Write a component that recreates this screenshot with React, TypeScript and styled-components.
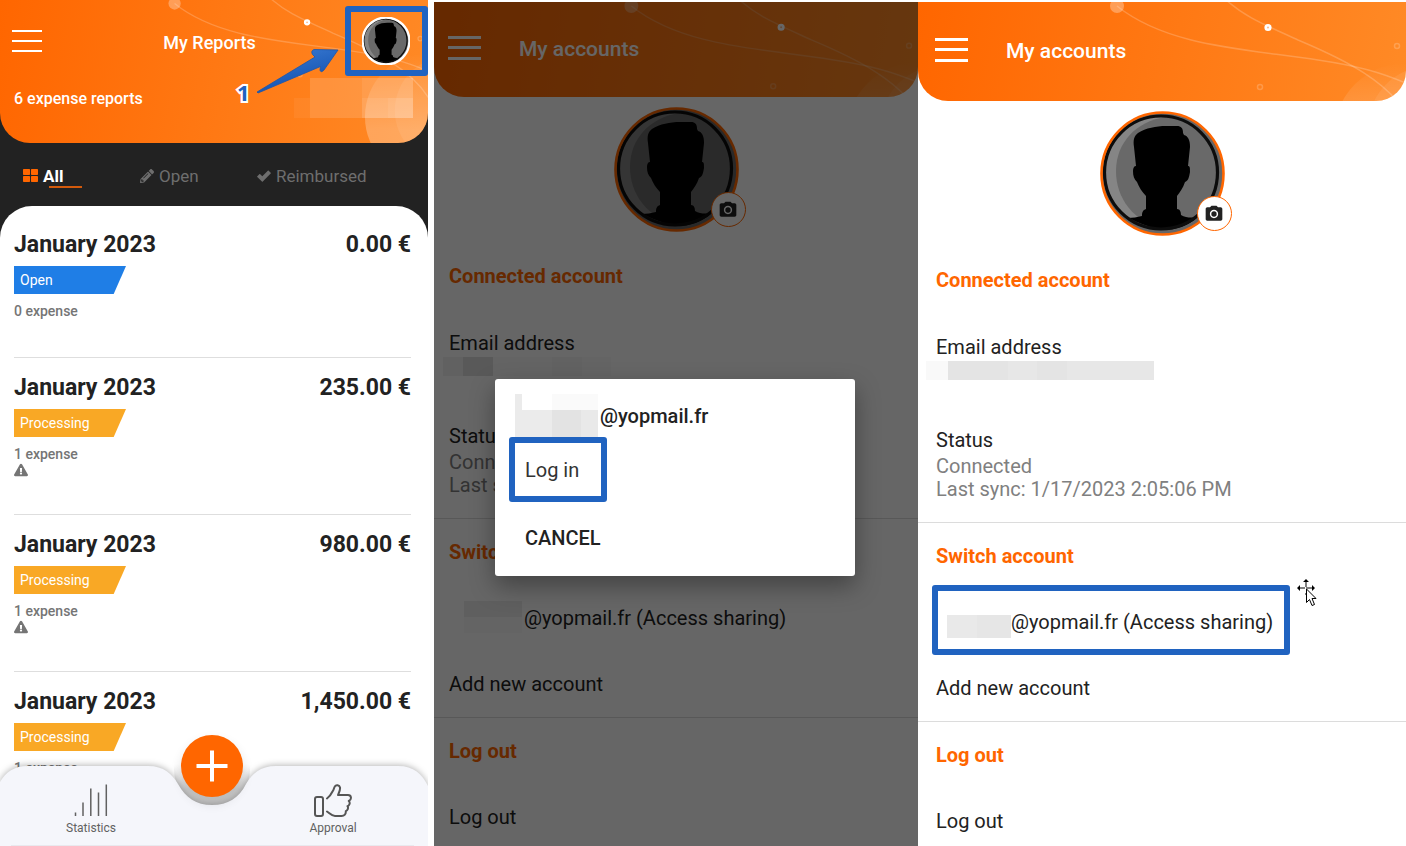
import React from "react";
import styled, { createGlobalStyle, css } from "styled-components";
import { FaPencilAlt, FaThLarge, FaExclamationTriangle } from "react-icons/fa";
import { MdCameraAlt } from "react-icons/md";

const ORANGE = "#ff6600";
const BLUE = "#2063c0";

const GlobalStyle = createGlobalStyle`
  * { box-sizing: border-box; }
  body { margin: 0; background: #fff; font-family: Roboto, "Liberation Sans", sans-serif; color: #222; }
  button { font: inherit; color: inherit; background: none; border: 0; padding: 0; margin: 0; text-align: left; cursor: pointer; }
  h1, h2, h3, p, ul, dl, dd { margin: 0; padding: 0; font: inherit; list-style: none; }
  svg { display: block; }
`;

const Board = styled.div`
  display: grid;
  grid-template-columns: 434fr 484fr 488fr;
  height: 100vh;
`;

/* ---------- shared header ---------- */

const HeaderBar = styled.header`
  position: relative;
  background: linear-gradient(100deg, ${ORANGE} 0%, #ff8a26 100%);
  border-radius: 0 0 30px 30px;
  color: #fff;
  overflow: hidden;
`;

const HeaderArt = styled.svg`
  position: absolute;
  inset: 0;
  width: 100%;
  height: 100%;
`;

function Constellation({ id }: { id: string }) {
  return (
    <HeaderArt viewBox="0 0 488 163" preserveAspectRatio="xMinYMin slice" aria-hidden="true">
      <defs>
        <linearGradient id={id} x1="0" y1="0" x2="0" y2="1">
          <stop offset="0" stopColor="#fff" stopOpacity="0" />
          <stop offset="0.6" stopColor="#fff" stopOpacity="0.26" />
        </linearGradient>
      </defs>
      <circle cx="488" cy="133" r="72" fill={`url(#${id})`} />
      <circle cx="512" cy="126" r="62" fill="#fff" fillOpacity="0.07" />
      <circle cx="199" cy="4" r="7" fill="#fff" fillOpacity="0.3" />
      <g fill="none" stroke="#fff" strokeOpacity="0.2" strokeWidth="1.5">
        <path d="M199 4C250 45 330 47 400 58C440 64 462 70 490 82" />
        <path d="M306 -4C325 14 345 22 380 38C430 59 470 80 490 114" />
        <circle cx="342" cy="85" r="2.5" />
        <circle cx="479" cy="44" r="2.5" />
      </g>
      <circle cx="350" cy="25.500" r="2.300" fill="#ffb98a" stroke="#fff" strokeWidth="2.6" />
    </HeaderArt>
  );
}

const Burger = styled.button<{ $size: number }>`
  position: relative;
  display: flex;
  flex-direction: column;
  justify-content: space-between;
  width: ${(p) => p.$size}px;
  height: ${(p) => (p.$size > 30 ? 24 : 22)}px;
  flex: none;
`;

const BurgerLine = styled.span<{ $thick: boolean }>`
  height: ${(p) => (p.$thick ? 3 : 2)}px;
  background: currentColor;
`;

function MenuButton({ size }: { size: number }) {
  const thick = size > 30;
  return (
    <Burger $size={size} aria-label="Menu">
      <BurgerLine $thick={thick} />
      <BurgerLine $thick={thick} />
      <BurgerLine $thick={thick} />
    </Burger>
  );
}

/* ---------- avatar drawing ---------- */

const AvatarSvg = styled.svg<{ $size: number }>`
  width: ${(p) => p.$size}px;
  height: ${(p) => p.$size}px;
`;

function AvatarArt({ size, ring }: { size: number; ring: string }) {
  return (
    <AvatarSvg $size={size} viewBox="0 0 125 125" role="img" aria-label="Profile picture">
      <circle cx="62.5" cy="62.5" r="61" fill="#666" />
      <circle cx="61.5" cy="61.5" r="56.500" fill="#858585" />
      <path d="M66 6C36 10 16 32 16 60C16 88 34 110 62 118A56.100 56.100 0 0 0 66 6Z" fill="#696969" />
      <path
        d="M66 15H77C81 15 83 17 83 22L84 24C88 25 90 29 90 36L88 55C90 55 90 57 90 61C89 67 88 70 85 71C83 77 80 81 77 85V98C80 98 81 101 81 104C86 107 92 107 98 106C88 115 76 119 62 119C48 119 36 114 27 107C33 107 37 106 42 105C42 101 43 99 46 98V85C42 81 39 76 37 71C34 68 33 65 33 60C33 57 34 55 36 55L34 36C33 29 34 25 38 22C46 17 56 15 66 15Z"
        fill="#000"
      />
      <path d="M29 107C38 112 47 115 57 118C45 118 36 114 29 107Z" fill="#555" />
      <circle cx="61" cy="61.500" r="56.500" fill="none" stroke="#0c0c0c" strokeWidth="3.2" />
      <circle cx="62.5" cy="62.5" r="61" fill="none" stroke={ring} strokeWidth={size > 60 ? 2.6 : 6} />
    </AvatarSvg>
  );
}

/* ---------- reports screen ---------- */

const ReportsScreen = styled.section`
  position: relative;
  display: flex;
  flex-direction: column;
  margin-right: 6px;
  overflow: hidden;
  background: #222;
`;

const ReportsHeader = styled(HeaderBar)`
  flex: none;
  height: 143px;
`;

const ReportsTop = styled.div`
  position: relative;
  display: flex;
  align-items: center;
  justify-content: space-between;
  height: 82px;
  padding: 5px 0 5px 12px;
`;

const ReportsTitle = styled.h1`
  font-size: 18px;
  line-height: 24px;
  font-weight: 500;
  padding: 3px 0 0 32px;
`;

const ProfileButton = styled.button`
  display: flex;
  align-items: center;
  justify-content: center;
  width: 83px;
  height: 70px;
  border: 6px solid ${BLUE};
  border-radius: 3px;
`;

const ReportsSummary = styled.div`
  position: relative;
  display: flex;
  align-items: center;
  justify-content: space-between;
  padding: 0 15px 0 14px;
  height: 32px;
  font-size: 16px;
  font-weight: 500;
`;

const AmountMask = styled.div`
  display: grid;
  grid-template-columns: 16px 52px 26px 25px;
  grid-template-rows: 20px 20px;
`;

const MaskCell = styled.span<{ $alpha: number }>`
  background: rgba(255, 255, 255, ${(p) => p.$alpha});
`;

const Callout = styled.div`
  position: absolute;
  top: 44px;
  left: 237px;
  display: flex;
  align-items: flex-end;
  gap: 6px;
`;

const CalloutNumber = styled.span`
  font: 700 22px/24px "Open Sans", sans-serif;
  color: ${BLUE};
  -webkit-text-stroke: 4px #fff;
  paint-order: stroke fill;
  margin-bottom: -8px;
`;

const Tabs = styled.nav`
  flex: none;
  display: flex;
  height: 63px;
  padding-left: 23px;
`;

const Tab = styled.button<{ $active?: boolean; $width?: number }>`
  display: flex;
  align-items: center;
  gap: 5px;
  width: ${(p) => p.$width}px;
  font-size: 17px;
  line-height: 24px;
  color: #6e6e6e;
  position: relative;
  padding-top: 2px;
  ${(p) =>
    p.$active &&
    css`
      color: #fff;
      font-weight: 700;
      svg { color: ${ORANGE}; }
      &::after {
        content: "";
        position: absolute;
        left: 26px;
        top: 43px;
        width: 33px;
        height: 2px;
        background: #d35a0c;
      }
    `}
`;

const Sheet = styled.ul`
  flex: 1;
  min-height: 0;
  overflow: hidden;
  padding: 9px 17px 0 14px;
  background: #fff;
  border-radius: 32px 32px 0 0;
`;

const Report = styled.li`
  padding: 16px 0 37px;
  border-bottom: 1px solid #dedede;
`;

const ReportHead = styled.div`
  display: flex;
  justify-content: space-between;
  font-size: 23px;
  line-height: 28px;
  font-weight: 700;
`;

const StatusTag = styled.div<{ $color: string }>`
  width: 112px;
  height: 28px;
  margin: 7px 0 8px;
  padding-left: 6px;
  font-size: 14px;
  line-height: 29px;
  color: #fff;
  background: ${(p) => p.$color};
  clip-path: polygon(0 0, 100% 0, 89% 100%, 0 100%);
`;

const ExpenseCount = styled.p`
  font-size: 14px;
  line-height: 18px;
  font-weight: 500;
  color: #757575;
  & + svg { color: #757575; }
`;

const BottomNav = styled.nav`
  position: absolute;
  left: 0;
  right: 0;
  bottom: 0;
  height: 80px;
  display: flex;
  justify-content: space-between;
  padding: 18px 34px 0 30px;
`;

const NavShape = styled.svg`
  position: absolute;
  inset: 0;
  width: 100%;
  height: 100%;
  overflow: visible;
  filter: drop-shadow(0 -1px 3px rgba(0, 0, 0, 0.28));
`;

const NavItem = styled.button`
  position: relative;
  width: 122px;
  display: flex;
  flex-direction: column;
  align-items: center;
  gap: 3px;
  font-size: 12px;
  line-height: 16px;
  color: #616161;
`;

const AddButton = styled.button`
  position: absolute;
  left: calc(50% - 33px);
  top: -31px;
  width: 62px;
  height: 62px;
  border-radius: 50%;
  background: ${ORANGE};
  display: flex;
  align-items: center;
  justify-content: center;
  box-shadow: 0 6px 12px rgba(0, 0, 0, 0.12);
`;

const TroughShade = styled.svg`
  position: absolute;
  left: calc(50% - 42px);
  top: -20px;
  width: 80px;
  height: 62px;
`;

type ReportData = { amount: string; status: "Open" | "Processing"; expenses: string };

const reports: ReportData[] = [
  { amount: "0.00 €", status: "Open", expenses: "0 expense" },
  { amount: "235.00 €", status: "Processing", expenses: "1 expense" },
  { amount: "980.00 €", status: "Processing", expenses: "1 expense" },
  { amount: "1,450.00 €", status: "Processing", expenses: "1 expense" },
];

function Reports() {
  return (
    <ReportsScreen>
      <ReportsHeader>
        <Constellation id="glow-reports" />
        <ReportsTop>
          <MenuButton size={30} />
          <ReportsTitle>My Reports</ReportsTitle>
          <ProfileButton aria-label="My accounts">
            <AvatarArt size={48} ring="#fff" />
          </ProfileButton>
        </ReportsTop>
        <ReportsSummary>
          <p>6 expense reports</p>
          <AmountMask>
            <MaskCell $alpha={0} />
            <MaskCell $alpha={0.14} />
            <MaskCell $alpha={0.2} />
            <MaskCell $alpha={0.2} />
            <MaskCell $alpha={0.05} />
            <MaskCell $alpha={0.14} />
            <MaskCell $alpha={0.26} />
            <MaskCell $alpha={0.3} />
          </AmountMask>
        </ReportsSummary>
      </ReportsHeader>

      <Tabs>
        <Tab $active $width={117}>
          <FaThLarge size={15} />
          All
        </Tab>
        <Tab $width={117}>
          <FaPencilAlt size={14} />
          Open
        </Tab>
        <Tab $width={114}>
          <svg width="14" height="14" viewBox="0 0 14 14" fill="currentColor" aria-hidden="true">
            <path d="M0.300 7.200L2.300 5.200C2.600 4.900 2.900 4.900 3.200 5.200L5.300 7.300L10.800 1.700C11.100 1.400 11.400 1.400 11.700 1.700L13.700 3.700C14 4 14 4.300 13.700 4.600L5.800 12.400C5.500 12.700 5.200 12.700 4.900 12.400L0.300 8C0 7.700 0 7.500 0.300 7.200Z" />
          </svg>
          Reimbursed
        </Tab>
      </Tabs>

      <Sheet>
        {reports.map((r) => (
          <Report key={r.amount}>
            <ReportHead>
              <h2>January 2023</h2>
              <p>{r.amount}</p>
            </ReportHead>
            <StatusTag $color={r.status === "Open" ? "#1f7ee6" : "#f9a825"}>{r.status}</StatusTag>
            <ExpenseCount>{r.expenses}</ExpenseCount>
            {r.status === "Processing" && <FaExclamationTriangle size={14} />}
          </Report>
        ))}
      </Sheet>

      <BottomNav>
        <TroughShade viewBox="0 0 80 62" aria-hidden="true">
          <defs>
            <linearGradient id="trough" x1="0" y1="0" x2="0" y2="1">
              <stop offset="0.42" stopColor="#d2d2d2" stopOpacity="0" />
              <stop offset="0.75" stopColor="#d2d2d2" />
            </linearGradient>
          </defs>
          <ellipse cx="40" cy="24" rx="38" ry="38" fill="url(#trough)" />
        </TroughShade>
        <NavShape viewBox="0 0 428 80" preserveAspectRatio="none" aria-hidden="true">
          <path
            d="M0 16C6 6 14 0 28 0H148C164 0 172 8 178 18C186 32 196 39 212 39C228 39 239 32 246 18C252 8 260 0 276 0H398C414 0 422 8 428 20V80H0Z"
            fill="#f5f6fb"
          />
          <path d="M11 79.500H414" stroke="#e9e9ee" />
        </NavShape>
        <NavItem>
          <svg width="34" height="33" viewBox="0 0 34 33" fill="none" stroke="#616161" strokeWidth="1.5" aria-hidden="true">
            <path d="M1.500 28.500V32M9 18.500V32M16.800 4.500V32M24.500 8.500V32M32.300 0.500V32" />
          </svg>
          Statistics
        </NavItem>
        <NavItem>
          <svg width="38" height="33" viewBox="0 0 38 33" fill="none" stroke="#555" strokeWidth="2" strokeLinecap="round" strokeLinejoin="round" aria-hidden="true">
            <rect x="1" y="13" width="8" height="19" rx="2" />
            <path d="M13 14.500C16 12.500 17 10.500 18.500 7.500C20 6 19.800 4 20.800 2.500C22 0.500 25.500 1 26 3.500C26.500 6 25 8.500 24 11H34C37.500 11 38 15.500 34.800 17C36.500 18.500 35.500 21.500 33.500 22.200C34.800 24 33.500 26.500 31.800 27.200C32 30 30.500 32 27.500 32H21C17.500 32 16 29.500 13 27.500" />
          </svg>
          Approval
        </NavItem>
        <AddButton aria-label="Add">
          <svg width="32" height="32" viewBox="0 0 32 32" stroke="#fff" strokeWidth="4" aria-hidden="true">
            <path d="M16 0.500V31.500M0.500 16H31.500" />
          </svg>
        </AddButton>
      </BottomNav>

      <Callout>
        <CalloutNumber>1</CalloutNumber>
        <svg width="84" height="52" viewBox="0 0 84 52" aria-hidden="true">
          <defs>
            <linearGradient id="arrow" x1="0" y1="0" x2="0.5" y2="1">
              <stop offset="0" stopColor="#3f7fd6" />
              <stop offset="1" stopColor="#0f4fae" />
            </linearGradient>
          </defs>
          <path
            d="M1 48L59 13L56.500 10.500C55 8 56 5.500 59 5.500L82 6L68 26C66 28.500 64 28 64 25.500L64.500 22.500L2 49Z"
            fill="url(#arrow)"
            stroke="#1d56a8"
            strokeWidth="0.8"
          />
        </svg>
      </Callout>
    </ReportsScreen>
  );
}

/* ---------- accounts screen ---------- */

const AccountsScreen = styled.section<{ $inset: number }>`
  --inset: ${(p) => p.$inset}px;
  position: relative;
  margin-top: 2px;
  overflow: hidden;
  background: #fff;
  font-size: 20px;
  line-height: 24px;
`;

const AccountsHeader = styled(HeaderBar)<{ $height: number }>`
  display: flex;
  align-items: center;
  gap: 38px;
  height: ${(p) => p.$height}px;
  padding: 0 0 4px calc(var(--inset) - 1px);
`;

const AccountsTitle = styled.h1`
  position: relative;
  font-size: 21px;
  font-weight: 500;
  padding-top: 2px;
`;

const Portrait = styled.div`
  position: relative;
  width: 125px;
  margin: 10px auto 11px;
`;

const CameraButton = styled.button`
  position: absolute;
  right: -7px;
  bottom: 5px;
  width: 35px;
  height: 35px;
  display: flex;
  align-items: center;
  justify-content: center;
  border: 1px solid ${ORANGE};
  border-radius: 50%;
  background: #fff;
`;

const Group = styled.section`
  border-bottom: 1px solid #dcdcdc;
  &:last-of-type { border-bottom: 0; }
`;

const GroupTitle = styled.h2`
  padding: 21px var(--inset);
  font-weight: 700;
  color: ${ORANGE};
`;

const Row = styled.button`
  position: relative;
  display: flex;
  align-items: center;
  width: 100%;
  height: 66px;
  padding: 0 var(--inset);
`;

const Facts = styled.dl`
  padding: 22px var(--inset) 21px;
`;

const Muted = styled.dd`
  line-height: 23px;
  color: #808080;
  dt + & { padding-top: 3px; }
`;

const EmailMask = styled.dd<{ $dim?: boolean }>`
  width: ${(p) => (p.$dim ? 221 : 228)}px;
  height: 19px;
  margin: 2px 0 48px;
  margin-left: ${(p) => (p.$dim ? -6 : -10)}px;
  background: ${(p) =>
    p.$dim
      ? "linear-gradient(90deg, #f2f2f2 20px, #dedede 20px 50px, #fafafa 50px 109px, #f5f5f5 109px 139px, #fafafa 139px 168px, #fff 168px)"
      : "linear-gradient(90deg, #f9f9f9 22px, #e4e4e4 22px 82px, #e7e7e7 82px 111px, #e4e4e4 111px 141px, #e7e7e7 141px)"};
`;

const NameMask = styled.span<{ $dim?: boolean }>`
  width: 75px;
  flex: none;
  height: ${(p) => (p.$dim ? 32 : 23)}px;
  margin-top: ${(p) => (p.$dim ? -2 : 8)}px;
  background: ${(p) =>
    p.$dim
      ? "linear-gradient(#eee, #eee) 15px 0 / 58px 16px no-repeat, linear-gradient(#f9f9f9, #f9f9f9) 15px 16px / 58px 16px no-repeat"
      : "linear-gradient(90deg, #fff 11px, #e9e9e9 11px 41px, #e6e6e6 41px)"};
`;

const RowHighlight = styled.span`
  position: absolute;
  top: -4px;
  left: 14px;
  width: 358px;
  height: 70px;
  border: 6px solid ${BLUE};
  border-radius: 3px;
`;

const MoveCursor = styled.svg`
  position: absolute;
  top: -10px;
  left: 379px;
`;

const Scrim = styled.div`
  position: absolute;
  inset: 0;
  padding: 377px 63px 0 61px;
  background: rgba(0, 0, 0, 0.6);
`;

const Dialog = styled.div`
  display: flex;
  flex-direction: column;
  align-items: flex-start;
  padding: 15px 14px 26px;
  background: #fff;
  border-radius: 3px;
  box-shadow: 0 10px 24px rgba(0, 0, 0, 0.35);
`;

const DialogTitle = styled.h2`
  display: flex;
  align-items: center;
  gap: 2px;
  padding-left: 6px;
  height: 43px;
  font-weight: 500;
`;

const DialogMask = styled.span`
  width: 83px;
  height: 43px;
  background:
    linear-gradient(#ebebeb, #ebebeb) 0 0 / 7px 16px no-repeat,
    linear-gradient(#fafafa, #fafafa) 37px 0 / 46px 16px no-repeat,
    linear-gradient(90deg, #ebebeb 37px, #e3e3e3 37px 66px, #e9e9e9 66px) 0 16px / 83px 27px no-repeat;
`;

const LoginButton = styled.button`
  width: 98px;
  height: 65px;
  padding-left: 10px;
  border: 6px solid ${BLUE};
  border-radius: 3px;
  color: #333;
`;

const CancelButton = styled.button`
  margin: 24px 0 0 16px;
  font-weight: 500;
`;

type AccountsProps = { id: string; inset: number; headerHeight: number; dialog?: boolean };

function Accounts({ id, inset, headerHeight, dialog }: AccountsProps) {
  return (
    <AccountsScreen $inset={inset}>
      <AccountsHeader $height={headerHeight}>
        <Constellation id={id} />
        <MenuButton size={33} />
        <AccountsTitle>My accounts</AccountsTitle>
      </AccountsHeader>

      <Portrait>
        <AvatarArt size={125} ring={ORANGE} />
        <CameraButton aria-label="Change picture">
          <MdCameraAlt size={20} />
        </CameraButton>
      </Portrait>

      <Group>
        <GroupTitle>Connected account</GroupTitle>
        <Facts>
          <dt>Email address</dt>
          <EmailMask $dim={dialog} />
          <dt>Status</dt>
          <Muted>Connected</Muted>
          <Muted>Last sync: 1/17/2023 2:05:06 PM</Muted>
        </Facts>
      </Group>

      <Group>
        <GroupTitle>Switch account</GroupTitle>
        <Row>
          <NameMask $dim={dialog} />
          @yopmail.fr (Access sharing)
          {!dialog && (
            <>
              <RowHighlight />
              <MoveCursor width="20" height="28" viewBox="0 0 20 28" aria-hidden="true">
                <path d="M9 1V8M1 9H8M9 9H17M9 14V16" stroke="#000" strokeWidth="1" fill="none" />
                <path d="M9 0L12 3H6ZM0 9L3 6V12ZM18 9L15 6V12Z" fill="#000" />
                <path d="M9.500 10V23.500L12.500 20.500L15 26.500L17.500 25.500L15 19.500H19Z" fill="#fff" stroke="#000" strokeWidth="1" />
              </MoveCursor>
            </>
          )}
        </Row>
        <Row>Add new account</Row>
      </Group>

      <Group>
        <GroupTitle>Log out</GroupTitle>
        <Row>Log out</Row>
      </Group>

      {dialog && (
        <Scrim>
          <Dialog role="dialog" aria-modal="true" aria-label="Account">
            <DialogTitle>
              <DialogMask />
              @yopmail.fr
            </DialogTitle>
            <LoginButton>Log in</LoginButton>
            <CancelButton>CANCEL</CancelButton>
          </Dialog>
        </Scrim>
      )}
    </AccountsScreen>
  );
}

export default function App() {
  return (
    <>
      <GlobalStyle />
      <Board>
        <Reports />
        <Accounts id="glow-dialog" inset={15} headerHeight={95} dialog />
        <Accounts id="glow-accounts" inset={18} headerHeight={99} />
      </Board>
    </>
  );
}
